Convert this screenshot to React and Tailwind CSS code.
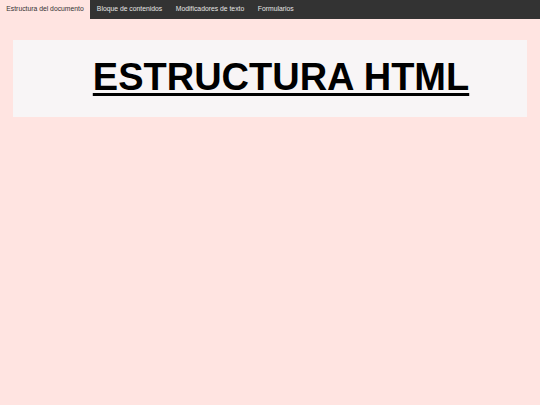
export default function App() {
  const tabs = ["Estructura del documento", "Bloque de contenidos", "Modificadores de texto", "Formularios"];
  return (
    <div className="w-[540px] h-[405px] bg-[#ffe4e1] overflow-hidden" style={{ fontFamily: '"Liberation Sans", Arial, sans-serif' }}>
      <nav className="flex h-[19px] bg-[#333333]">
        {tabs.map((t, i) => (
          <a
            key={t}
            className={
              i === 0
                ? "flex items-center px-[6.3px] text-[6.8px] leading-none bg-[#ffe4e1] text-[#333333]"
                : "flex items-center px-[6.8px] text-[6.8px] leading-none text-[#e6e6e6]"
            }
          >
            {t}
          </a>
        ))}
      </nav>
      <div className="mx-[13px] mt-[21px] h-[77px] bg-[#f8f5f6] flex items-center justify-center pl-[22px]">
        <h1 className="text-[38px] font-bold underline decoration-[3px] underline-offset-[3px] text-black leading-none mt-[-3px]">
          ESTRUCTURA HTML
        </h1>
      </div>
    </div>
  );
}
